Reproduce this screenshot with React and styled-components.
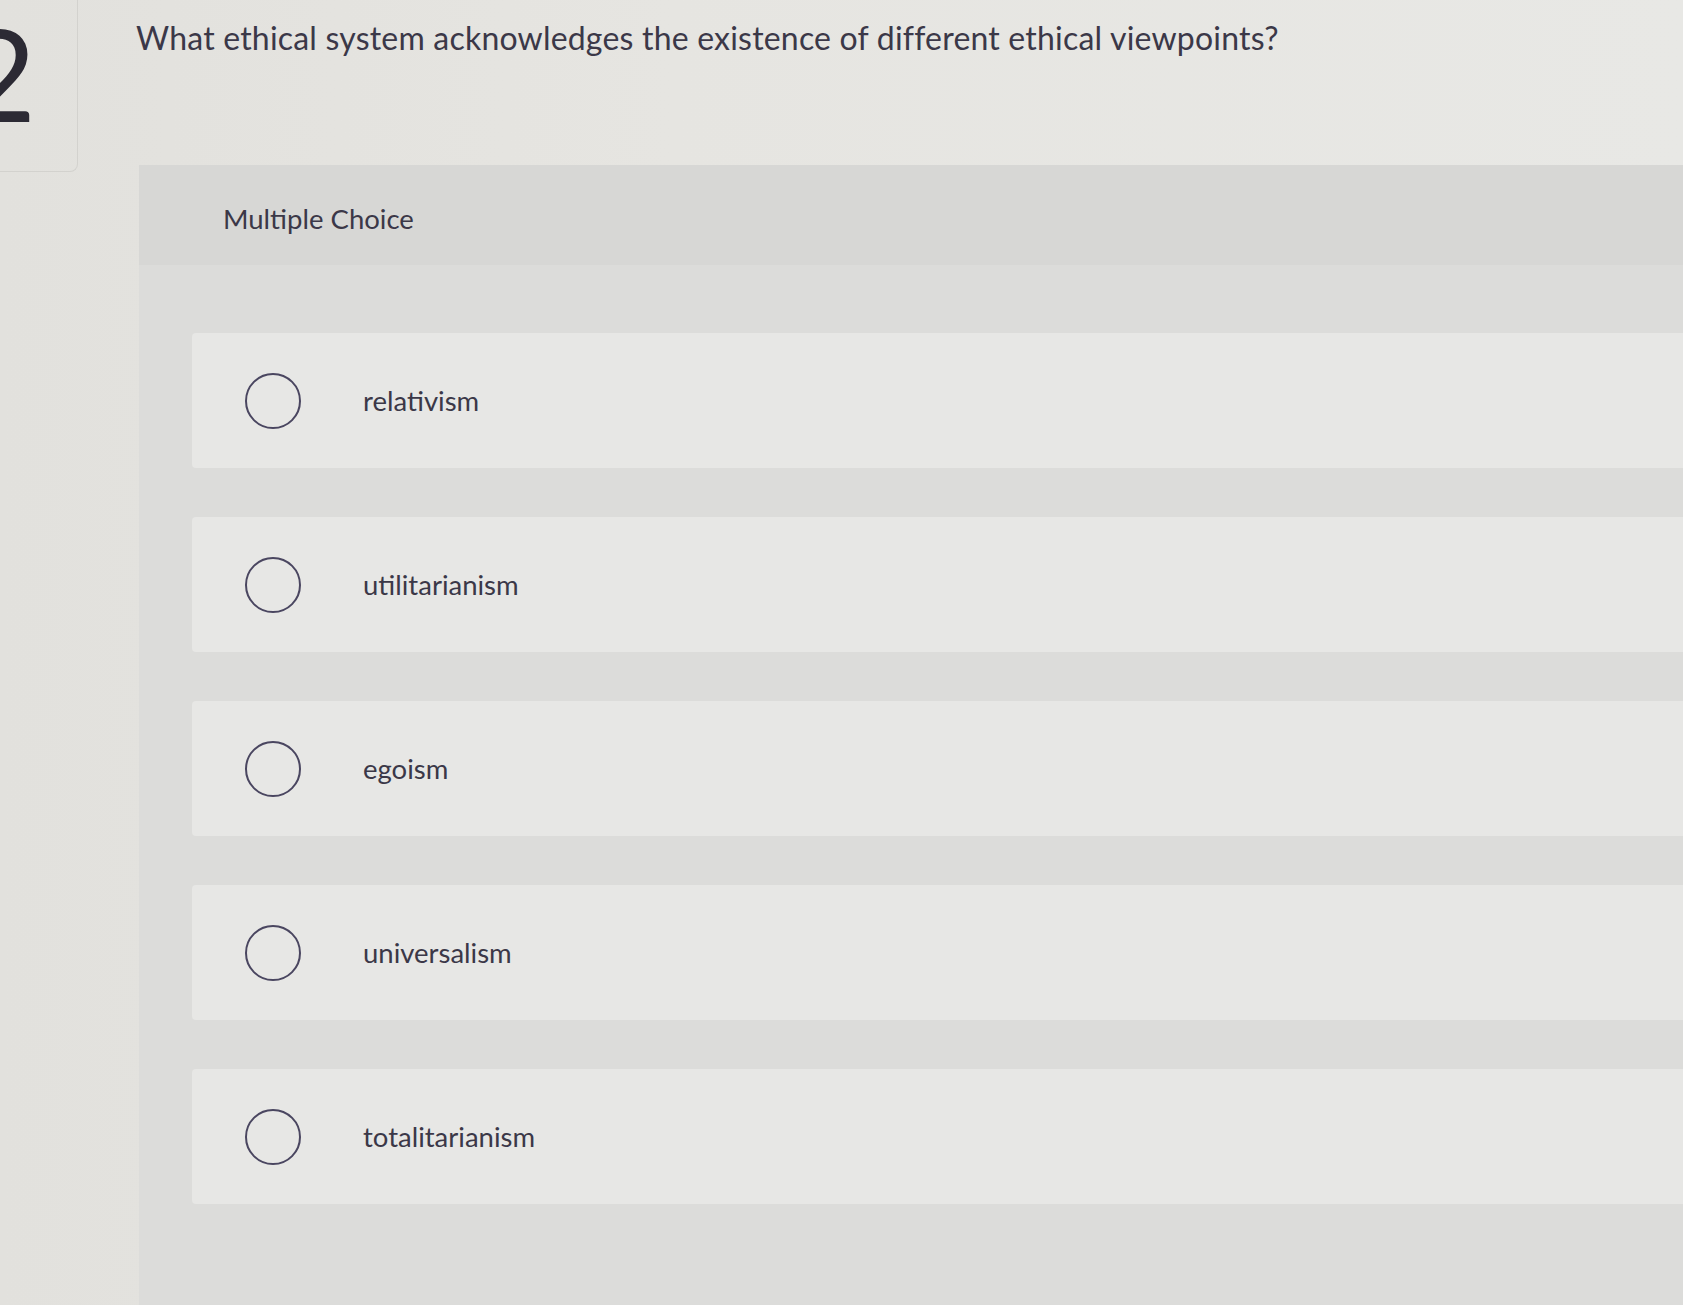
import React from "react";
import styled, { createGlobalStyle } from "styled-components";

const GlobalStyle = createGlobalStyle`
  html, body {
    margin: 0;
    padding: 0;
    background: #e4e3df;
    overflow: hidden;
  }
  body {
    font-family: Lato, "Open Sans", "Liberation Sans", sans-serif;
    color: #3b3848;
  }
`;

const Page = styled.div`
  display: grid;
  grid-template-columns: 78px 1fr;
  column-gap: 61px;
  min-height: 100vh;
  background: linear-gradient(90deg, #e2e1dd 0%, #e6e5e1 40%, #e8e8e5 100%);
`;

const NumberCard = styled.div`
  height: 172px;
  box-sizing: border-box;
  border-right: 1px solid #d3d2ce;
  border-bottom: 1px solid #d3d2ce;
  border-radius: 0 0 8px 0;
  overflow: hidden;
  display: flex;
  align-items: flex-start;
`;

const Number = styled.span`
  font-family: Lato, "Open Sans", sans-serif;
  font-size: 128px;
  font-weight: 400;
  line-height: 1;
  margin-top: 9px;
  margin-left: -38px;
  color: #2c2a34;
`;

const Main = styled.div`
  display: flex;
  flex-direction: column;
  min-width: 0;
`;

const Question = styled.h1`
  margin: 0 0 0 -3px;
  padding: 19px 0 0;
  height: 145px;
  box-sizing: border-box;
  font-size: 32px;
  font-weight: 400;
  line-height: 38px;
  color: #3b3848;
  letter-spacing: 0.2px;
`;

const Panel = styled.section`
  flex: 1;
  display: flex;
  flex-direction: column;
  background: #dcdcda;
  margin-top: 20px;
`;

const PanelHeader = styled.div`
  height: 100px;
  display: flex;
  align-items: center;
  padding-left: 84px;
  padding-top: 6px;
  box-sizing: border-box;
  background: #d7d7d5;
  font-size: 27.5px;
  color: #3b3848;
`;

const Options = styled.div`
  display: flex;
  flex-direction: column;
  gap: 49px;
  padding: 68px 0 100px 53px;
`;

const Option = styled.label`
  height: 135px;
  display: flex;
  align-items: center;
  padding-left: 53px;
  background: #e7e7e5;
  border-radius: 4px 0 0 4px;
  cursor: pointer;
`;

const Radio = styled.span`
  width: 56px;
  height: 56px;
  box-sizing: border-box;
  border: 2.5px solid #4a4660;
  border-radius: 50%;
  flex-shrink: 0;
`;

const OptionText = styled.span`
  margin-left: 62px;
  font-size: 27.5px;
  color: #3b3848;
`;

const choices = [
  "relativism",
  "utilitarianism",
  "egoism",
  "universalism",
  "totalitarianism",
];

export default function App() {
  return (
    <>
      <GlobalStyle />
      <Page>
        <NumberCard>
          <Number>2</Number>
        </NumberCard>
        <Main>
          <Question>
            What ethical system acknowledges the existence of different ethical
            viewpoints?
          </Question>
          <Panel>
            <PanelHeader>Multiple Choice</PanelHeader>
            <Options>
              {choices.map((c) => (
                <Option key={c}>
                  <Radio />
                  <OptionText>{c}</OptionText>
                </Option>
              ))}
            </Options>
          </Panel>
        </Main>
      </Page>
    </>
  );
}
